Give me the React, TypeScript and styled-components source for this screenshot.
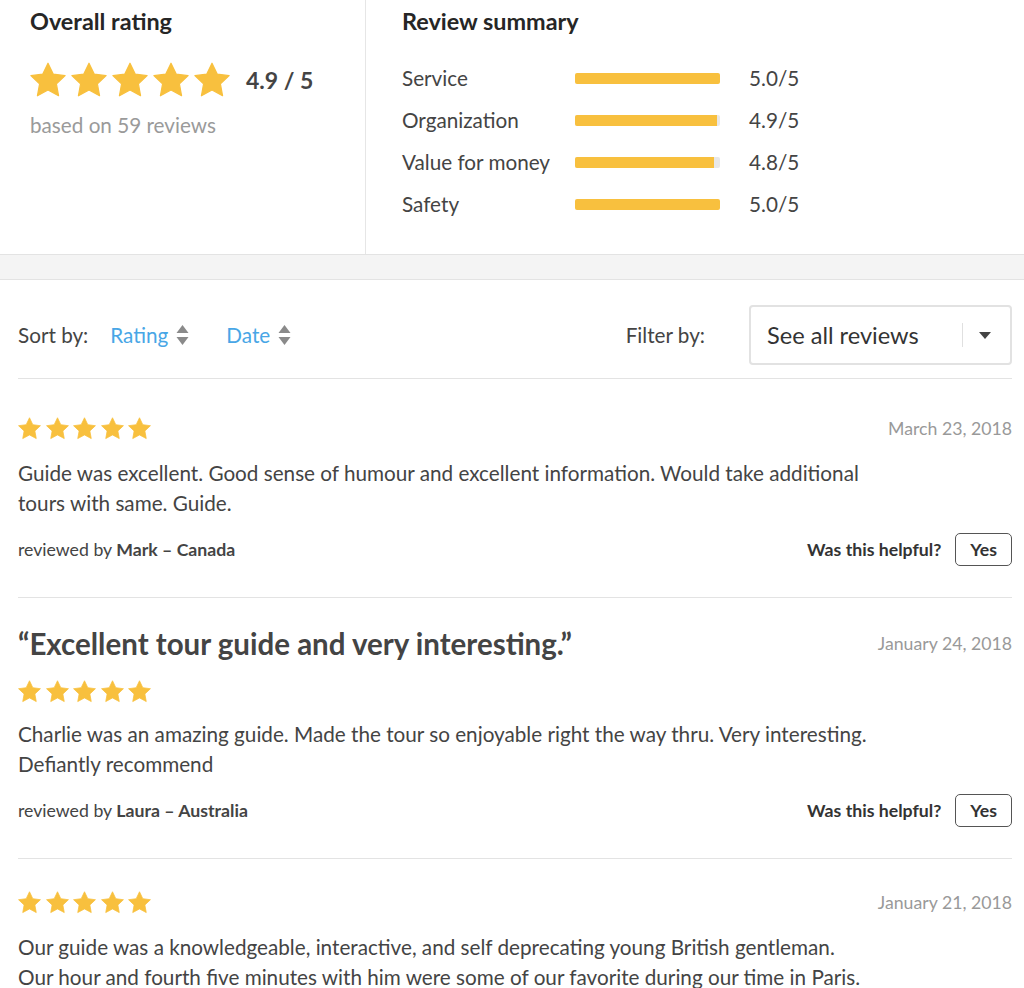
import React from 'react';
import styled, { createGlobalStyle } from 'styled-components';

const GlobalStyle = createGlobalStyle`
  body {
    margin: 0;
    background: #fff;
    font-family: Lato, "Open Sans", Arial, sans-serif;
    color: #444;
  }
`;

const STAR_COLOR = '#f8c03e';

const starPoints = (() => {
  const pts: string[] = [];
  for (let k = 0; k < 10; k++) {
    const r = k % 2 === 0 ? 12 : 5.9;
    const a = ((-90 + k * 36) * Math.PI) / 180;
    pts.push(`${(12 + r * Math.cos(a)).toFixed(2)},${(12.8 + r * Math.sin(a)).toFixed(2)}`);
  }
  return pts.join(' ');
})();

const Star = ({ size }: { size: number }) => (
  <svg width={size} height={size} viewBox="0 0 24 24">
    <polygon points={starPoints} fill={STAR_COLOR} stroke={STAR_COLOR} strokeWidth={0.8} strokeLinejoin="round" />
  </svg>
);

const StarRow = styled.div<{ $gap: number }>`
  display: flex;
  align-items: center;
  gap: ${(p) => p.$gap}px;
`;

const Stars = ({ size, gap }: { size: number; gap: number }) => (
  <StarRow $gap={gap}>
    {[0, 1, 2, 3, 4].map((i) => (
      <Star key={i} size={size} />
    ))}
  </StarRow>
);

/* ---------- summary ---------- */

const Summary = styled.section`
  display: flex;
  height: 254px;
`;

const OverallCol = styled.div`
  width: 335px;
  padding: 6px 0 0 30px;
  border-right: 1px solid #e6e6e6;
`;

const SummaryCol = styled.div`
  flex: 1;
  padding: 6px 0 0 36px;
`;

const Heading = styled.h2`
  margin: 0;
  font-size: 23.4px;
  line-height: 30px;
  font-weight: 700;
  color: #262626;
`;

const ScoreLine = styled.div`
  display: flex;
  align-items: center;
  gap: 16px;
  margin-top: 26px;
`;

const Score = styled.span`
  font-size: 23px;
  font-weight: 700;
  color: #444;
`;

const BasedOn = styled.div`
  margin-top: 15px;
  font-size: 20.7px;
  line-height: 24px;
  color: #9a9a9a;
`;

const MetricList = styled.div`
  margin-top: 21px;
`;

const MetricRow = styled.div`
  display: grid;
  grid-template-columns: 173px 145px auto;
  align-items: center;
  height: 42px;
  font-size: 20.7px;
  color: #444;
`;

const MetricValue = styled.span`
  margin-left: 29px;
`;

const Track = styled.div`
  height: 11px;
  border-radius: 2px;
  background: #e8e8e8;
  overflow: hidden;
`;

const Fill = styled.div`
  height: 100%;
  background: ${STAR_COLOR};
`;

const Band = styled.div`
  height: 24px;
  background: #f4f4f4;
  border-top: 1px solid #e3e3e3;
  border-bottom: 1px solid #e3e3e3;
`;

/* ---------- toolbar ---------- */

const Toolbar = styled.div`
  display: flex;
  align-items: center;
  justify-content: space-between;
  margin: 0 12px 6px 18px;
  padding: 25px 0 13px;
  border-bottom: 1px solid #e3e3e3;
`;

const Group = styled.div`
  display: flex;
  align-items: center;
`;

const ToolLabel = styled.span`
  font-size: 20.7px;
  color: #444;
`;

const SortLink = styled.a<{ $ml: number }>`
  display: inline-flex;
  align-items: center;
  gap: 8px;
  font-size: 20.7px;
  color: #48a6e6;
  text-decoration: none;
  margin-left: ${(p) => p.$ml}px;
  cursor: pointer;
`;

const SortIcon = () => (
  <svg width="13" height="22" viewBox="0 0 13 22">
    <path d="M6.5 1 L12.5 9 L0.5 9 Z" fill="#8a8a8a" />
    <path d="M6.5 21 L12.5 13 L0.5 13 Z" fill="#8a8a8a" />
  </svg>
);

const Select = styled.div`
  display: flex;
  align-items: center;
  box-sizing: border-box;
  width: 263px;
  height: 60px;
  margin-left: 44px;
  padding-left: 16px;
  border: 2px solid #e2e2e2;
  border-radius: 4px;
  font-size: 23.6px;
  color: #333;
`;

const SelectText = styled.span`
  flex: 1;
`;

const SelectDivider = styled.span`
  width: 1px;
  height: 24px;
  background: #e0e0e0;
`;

const Caret = styled.span`
  width: 0;
  height: 0;
  margin: 0 19px 0 16px;
  border-left: 6px solid transparent;
  border-right: 6px solid transparent;
  border-top: 7px solid #444;
`;

/* ---------- reviews ---------- */

const ReviewList = styled.div`
  margin: 0 12px 0 18px;
`;

const ReviewItem = styled.article`
  padding: 32px 0 31px;
  border-bottom: 1px solid #e3e3e3;
`;

const ReviewHead = styled.div<{ $titled: boolean }>`
  display: flex;
  align-items: center;
  justify-content: space-between;
  margin-top: ${(p) => (p.$titled ? -4 : 0)}px;
`;

const ReviewTitle = styled.h3`
  margin: 0;
  font-size: 29.5px;
  line-height: 35px;
  font-weight: 700;
  color: #444;
`;

const ReviewDate = styled.span`
  font-size: 17.7px;
  color: #999;
`;

const TitledStars = styled.div`
  margin-top: 19px;
`;

const Body = styled.p<{ $gap: number }>`
  margin: ${(p) => p.$gap}px 0 0;
  font-size: 20.7px;
  line-height: 30px;
  color: #444;
`;

const BodyLine = styled.span`
  display: block;
  white-space: nowrap;
`;

const Footer = styled.div`
  display: flex;
  align-items: center;
  justify-content: space-between;
  margin-top: 15px;
`;

const Reviewer = styled.span`
  font-size: 17.7px;
  color: #444;

  b {
    font-weight: 700;
  }
`;

const Helpful = styled.div`
  display: flex;
  align-items: center;
  gap: 14px;
  font-size: 17.7px;
  font-weight: 700;
  color: #333;
`;

const YesButton = styled.button`
  box-sizing: border-box;
  height: 33px;
  padding: 0 14px;
  background: #fff;
  border: 1px solid #555;
  border-radius: 5px;
  font-family: inherit;
  font-size: 17.7px;
  font-weight: 700;
  color: #333;
  cursor: pointer;
`;

interface Review {
  title?: string;
  date: string;
  lines: string[];
  name?: string;
}

const metrics = [
  { label: 'Service', value: 5.0 },
  { label: 'Organization', value: 4.9 },
  { label: 'Value for money', value: 4.8 },
  { label: 'Safety', value: 5.0 },
];

const reviews: Review[] = [
  {
    date: 'March 23, 2018',
    lines: [
      'Guide was excellent. Good sense of humour and excellent information. Would take additional',
      'tours with same. Guide.',
    ],
    name: 'Mark – Canada',
  },
  {
    title: '“Excellent tour guide and very interesting.”',
    date: 'January 24, 2018',
    lines: [
      'Charlie was an amazing guide. Made the tour so enjoyable right the way thru. Very interesting.',
      'Defiantly recommend',
    ],
    name: 'Laura – Australia',
  },
  {
    date: 'January 21, 2018',
    lines: [
      'Our guide was a knowledgeable, interactive, and self deprecating young British gentleman.',
      'Our hour and fourth five minutes with him were some of our favorite during our time in Paris.',
    ],
  },
];

const ReviewCard = ({ review }: { review: Review }) => {
  const titled = !!review.title;
  return (
    <ReviewItem>
      <ReviewHead $titled={titled}>
        {titled ? <ReviewTitle>{review.title}</ReviewTitle> : <Stars size={23} gap={4.5} />}
        <ReviewDate>{review.date}</ReviewDate>
      </ReviewHead>
      {titled && (
        <TitledStars>
          <Stars size={23} gap={4.5} />
        </TitledStars>
      )}
      <Body $gap={titled ? 16 : 18}>
        {review.lines.map((l) => (
          <BodyLine key={l}>{l}</BodyLine>
        ))}
      </Body>
      {review.name && (
        <Footer>
          <Reviewer>
            reviewed by <b>{review.name}</b>
          </Reviewer>
          <Helpful>
            Was this helpful?
            <YesButton>Yes</YesButton>
          </Helpful>
        </Footer>
      )}
    </ReviewItem>
  );
};

const App: React.FC = () => {
  return (
    <>
      <GlobalStyle />
      <Summary>
        <OverallCol>
          <Heading>Overall rating</Heading>
          <ScoreLine>
            <Stars size={36} gap={5} />
            <Score>4.9 / 5</Score>
          </ScoreLine>
          <BasedOn>based on 59 reviews</BasedOn>
        </OverallCol>
        <SummaryCol>
          <Heading>Review summary</Heading>
          <MetricList>
            {metrics.map((m) => (
              <MetricRow key={m.label}>
                <span>{m.label}</span>
                <Track>
                  <Fill style={{ width: `${(m.value / 5) * 100}%` }} />
                </Track>
                <MetricValue>{m.value.toFixed(1)}/5</MetricValue>
              </MetricRow>
            ))}
          </MetricList>
        </SummaryCol>
      </Summary>
      <Band />
      <Toolbar>
        <Group>
          <ToolLabel>Sort by:</ToolLabel>
          <SortLink $ml={22}>
            Rating <SortIcon />
          </SortLink>
          <SortLink $ml={37}>
            Date <SortIcon />
          </SortLink>
        </Group>
        <Group>
          <ToolLabel>Filter by:</ToolLabel>
          <Select>
            <SelectText>See all reviews</SelectText>
            <SelectDivider />
            <Caret />
          </Select>
        </Group>
      </Toolbar>
      <ReviewList>
        {reviews.map((r) => (
          <ReviewCard key={r.date} review={r} />
        ))}
      </ReviewList>
    </>
  );
};

export default App;
